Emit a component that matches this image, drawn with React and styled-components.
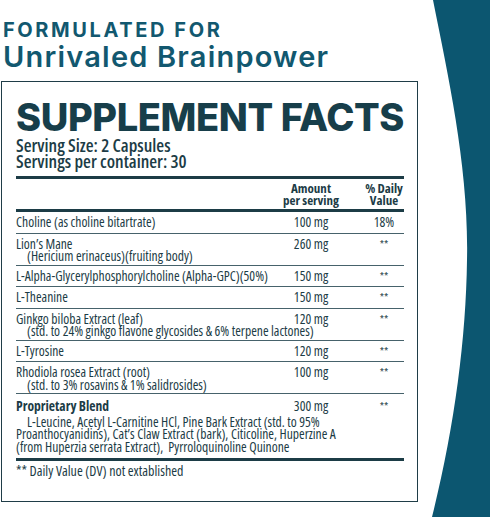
import styled, { createGlobalStyle } from 'styled-components';

const Global = createGlobalStyle`
  html, body { margin: 0; background: #ffffff; }
  * { box-sizing: border-box; }
`

const ink = '#1c3c46';
const teal = '#0c5670';
const narrow = `"Open Sans", "DejaVu Sans Condensed", sans-serif`;

const Page = styled.div`
  width: 490px;
  height: 517px;
  display: flex;
  overflow: hidden;
  background: #fff;
`

const Left = styled.div`
  width: 419px;
  flex-shrink: 0;
  padding: 18px 0 0 1px;
`

const Kicker = styled.div`
  padding-left: 2px;
  font-family: Inter, sans-serif;
  font-weight: 700;
  font-size: 20px;
  line-height: 24px;
  letter-spacing: 2.6px;
  color: #12586f;
`

const Headline = styled.h1`
  margin: 0;
  padding-left: 2px;
  font-family: Inter, sans-serif;
  font-weight: 600;
  font-size: 29px;
  line-height: 30px;
  letter-spacing: 1.2px;
  color: #12586f;
`

const Panel = styled.div`
  margin-top: 9px;
  width: 417px;
  border: 1px solid #1f3d47;
  padding: 15px 13px 23px 14px;
  color: ${ink};
  font-family: ${narrow};
  font-stretch: 75%;
`

const Title = styled.h2`
  margin: 0;
  font-family: Inter, sans-serif;
  font-stretch: normal;
  font-weight: 800;
  font-size: 38px;
  line-height: 40px;
  letter-spacing: -0.4px;
  color: #173e4a;
  white-space: nowrap;
`

const Serving = styled.div`
  font-size: 18px;
  font-weight: 600;
  line-height: 16px;
`

const Grid = styled.div`
  display: grid;
  grid-template-columns: minmax(0, 1fr) 58px 40px;
  column-gap: 24px;
  align-items: start;
`

const HeadRow = styled(Grid)`
  margin-top: 7px;
  border-top: 3px solid ${ink};
  border-bottom: 3px solid ${ink};
  padding: 3px 0;
  font-size: 13px;
  font-weight: 700;
  line-height: 12px;
`

const HeadCell = styled.div`
  grid-column: ${({ col }) => col};
  text-align: center;
  white-space: nowrap;
`

const Row = styled(Grid)`
  border-bottom: ${({ last }) => (last ? 'none' : `1px solid #46626b`)};
  padding: ${({ blend, tall }) => (blend ? '6px 0 5px' : tall ? '4px 0 2px' : '4px 0')};
  font-size: 13.6px;
  font-weight: 500;
  line-height: 12.5px;
`

const Name = styled.div`
  white-space: nowrap;
  font-weight: ${({ bold }) => (bold ? 700 : 500)};
`

const Amount = styled.div`
  text-align: center;
  white-space: nowrap;
`

const Daily = styled.div`
  text-align: center;
  white-space: nowrap;
  font-size: ${({ stars }) => (stars ? '11px' : '13.6px')};
`

const Sub = styled.div`
  grid-column: 1 / -1;
  padding-left: 11px;
  white-space: nowrap;
`

const Blend = styled.div`
  grid-column: 1 / -1;
  margin-top: 3px;
  text-indent: 11px;
  white-space: nowrap;
`

const Footnote = styled.div`
  border-top: 3px solid ${ink};
  padding-top: 3px;
  font-size: 14px;
  font-weight: 500;
  line-height: 14px;
`

const Ribbon = styled.svg`
  flex: 1;
  height: 517px;
  display: block;
`

const rows = [
  { name: 'Choline (as choline bitartrate)', amount: '100 mg', dv: '18%' },
  { name: 'Lion\u2019s Mane', sub: '(Hericium erinaceus)(fruiting body)', amount: '260 mg', dv: '**' },
  { name: 'L-Alpha-Glycerylphosphorylcholine (Alpha-GPC)(50%)', amount: '150 mg', dv: '**' },
  { name: 'L-Theanine', amount: '150 mg', dv: '**' },
  { name: 'Ginkgo biloba Extract (leaf)', sub: '(std. to 24% ginkgo flavone glycosides & 6% terpene lactones)', amount: '120 mg', dv: '**' },
  { name: 'L-Tyrosine', amount: '120 mg', dv: '**' },
  { name: 'Rhodiola rosea Extract (root)', sub: '(std. to 3% rosavins & 1% salidrosides)', amount: '100 mg', dv: '**' },
]

export default function App() {
  return (
    <Page>
      <Global />
      <Left>
        <Kicker>FORMULATED FOR</Kicker>
        <Headline>Unrivaled Brainpower</Headline>
        <Panel>
          <Title>SUPPLEMENT FACTS</Title>
          <Serving>
            Serving Size: 2 Capsules<br />
            Servings per container: 30
          </Serving>
          <HeadRow>
            <HeadCell col={2}>Amount<br />per serving</HeadCell>
            <HeadCell col={3}>% Daily<br />Value</HeadCell>
          </HeadRow>
          {rows.map((r) => (
            <Row key={r.name} tall={!!r.sub}>
              <Name>{r.name}</Name>
              <Amount>{r.amount}</Amount>
              <Daily stars={r.dv === '**'}>{r.dv}</Daily>
              {r.sub && <Sub>{r.sub}</Sub>}
            </Row>
          ))}
          <Row blend last>
            <Name bold>Proprietary Blend</Name>
            <Amount>300 mg</Amount>
            <Daily stars>**</Daily>
            <Blend>
              L-Leucine, Acetyl L-Carnitine HCl, Pine Bark Extract (std. to 95%<br />
              Proanthocyanidins), Cat’s Claw Extract (bark), Citicoline, Huperzine A<br />
              (from Huperzia serrata Extract),&nbsp; Pyrroloquinoline Quinone
            </Blend>
          </Row>
          <Footnote>** Daily Value (DV) not extablished</Footnote>
        </Panel>
      </Left>
      <Ribbon viewBox="0 0 71 517" preserveAspectRatio="none">
        <path d="M14 0 C30 80 50 170 48 260 C47 340 35 430 13 517 L71 517 L71 0 Z" fill={teal} />
      </Ribbon>
    </Page>
  )
}
